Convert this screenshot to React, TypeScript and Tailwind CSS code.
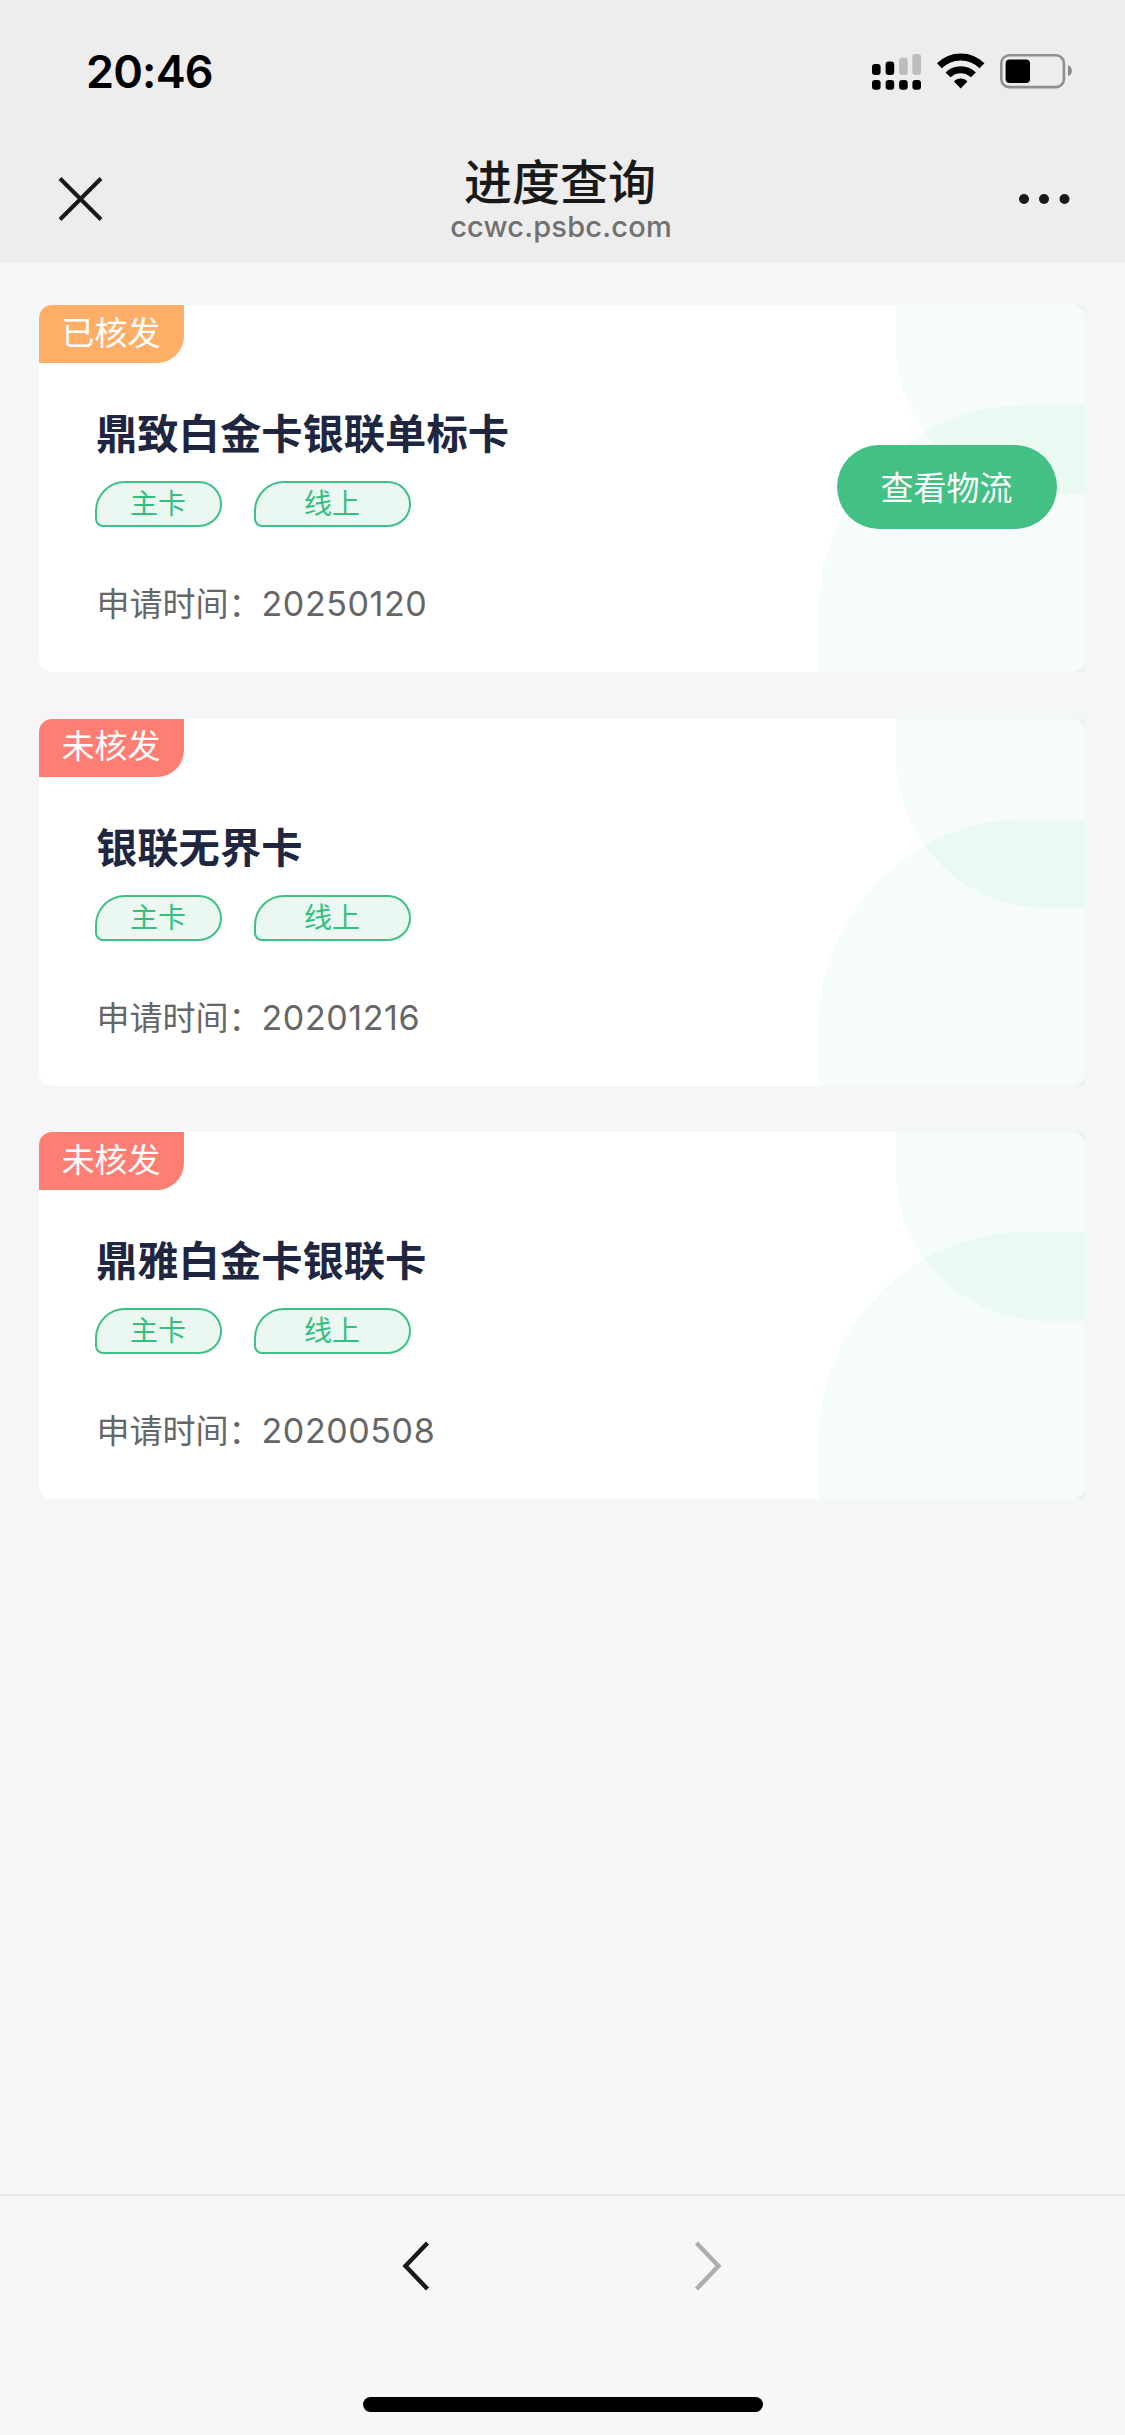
import clsx from "clsx";

interface Application {
  name: string;
  status: string;
  approved?: boolean;
  date: string;
}

const applications: Application[] = [
  { name: "鼎致白金卡银联单标卡", status: "已核发", approved: true, date: "20250120" },
  { name: "银联无界卡", status: "未核发", date: "20201216" },
  { name: "鼎雅白金卡银联卡", status: "未核发", date: "20200508" },
];

function SignalIcon() {
  return (
    <svg width="49" height="36" viewBox="0 0 49 36" className="mr-4">
      <rect x="0" y="10" width="8.6" height="11" rx="3" />
      <rect x="13.6" y="7.4" width="8.6" height="13.6" rx="3" />
      <rect x="27.1" y="3.8" width="8.6" height="17.2" rx="3" fill="#bcbcbc" />
      <rect x="40.4" y="0" width="8.6" height="21" rx="3" fill="#bcbcbc" />
      <rect x="0" y="26" width="8.6" height="9.8" rx="3" />
      <rect x="13.6" y="26" width="8.6" height="9.8" rx="3" />
      <rect x="27.1" y="26" width="8.6" height="9.8" rx="3" />
      <rect x="40.4" y="26" width="8.6" height="9.8" rx="3" />
    </svg>
  );
}

function WifiIcon() {
  return (
    <svg width="48" height="36" viewBox="0 0 48 36" className="mr-[15px] overflow-visible">
      <path d="M2.4 11.8C14.3 0 33.1 0 45 11.8" fill="none" stroke="#000" strokeWidth="7" />
      <path d="M11 20.9C18 13.9 29.4 13.9 36.4 20.9" fill="none" stroke="#000" strokeWidth="7" />
      <path d="M17 27.4C20.6 23.6 26.8 23.6 30.4 27.4L23.7 34.6Z" />
    </svg>
  );
}

function BatteryIcon() {
  return (
    <svg width="73" height="35" viewBox="0 0 73 35">
      <rect x="1.3" y="1.3" width="62.6" height="31.8" rx="8" fill="none" stroke="#8f8f8f" strokeWidth="2.6" />
      <rect x="5.6" y="5.5" width="24.4" height="23.4" rx="4" />
      <path d="M68 11.2C73.2 13 73.2 20.4 68 22.2Z" fill="#8a8a8a" />
    </svg>
  );
}

function Header() {
  return (
    <header className="h-[263px] bg-[#ededed]">
      <div className="flex h-[143px] items-start justify-between pl-[86px] pr-[52px] pt-[44px]">
        <span className="text-[45px] font-semibold leading-[56px] tracking-[-0.8px] text-black">20:46</span>
        <div className="flex items-start pt-[10px]">
          <SignalIcon />
          <WifiIcon />
          <BatteryIcon />
        </div>
      </div>
      <div className="flex h-[120px] items-start justify-between pl-[58px] pr-[54px]">
        <svg width="46" height="46" viewBox="0 0 46 46" className="mt-[33px]">
          <path d="M2 2.5L43 43.5M43 2.5L2 43.5" stroke="#191919" strokeWidth="4" />
        </svg>
        <div className="flex flex-col items-center pr-px pt-[12px]">
          <h1 className="pr-[2px] text-[48px] font-medium leading-[56px] text-[#191919]">进度查询</h1>
          <p className="text-[29px] font-medium leading-[32px] tracking-[0.2px] text-[#717171]">
            ccwc.psbc.com
          </p>
        </div>
        <svg width="52" height="12" viewBox="0 0 52 12" className="mt-[50px]">
          <circle cx="5" cy="6" r="5" fill="#191919" />
          <circle cx="25" cy="6" r="5" fill="#191919" />
          <circle cx="45.5" cy="6" r="5" fill="#191919" />
        </svg>
      </div>
    </header>
  );
}

function Tag({ label, wide }: { label: string; wide?: boolean }) {
  return (
    <span
      className={clsx(
        "flex h-[46px] items-center justify-center rounded-[23px] rounded-tl-[30px] rounded-bl-[8px] border-2 border-[#3ec183] bg-[#ebf8f2] pr-px text-[28px] leading-none text-[#35bf7e]",
        wide ? "w-[157px]" : "w-[127px]"
      )}
    >
      {label}
    </span>
  );
}

function ApplicationCard({ name, status, approved, date }: Application) {
  return (
    <div className="relative h-[367px] rounded-[13px] bg-white">
      <div className="absolute right-0 top-0 h-[189px] w-[189px] rounded-bl-[150px] bg-[#3cbc81]/5" />
      <div className="absolute bottom-0 right-0 h-[267px] w-[266px] rounded-tl-[207px] bg-[#3cbc81]/5" />
      <div
        className={clsx(
          "flex h-[58px] w-[145px] items-center justify-center rounded-tl-[13px] rounded-br-[27px] pb-[2px] pr-px text-[33px] leading-none text-white",
          approved ? "bg-[#ffae68]" : "bg-[#ff7e74]"
        )}
      >
        {status}
      </div>
      <div className="relative flex justify-between pl-[56px] pr-[28px]">
        <div>
          <h2 className="mt-[43px] pl-px text-[41.3px] font-bold leading-[56px] text-[#20263f]">{name}</h2>
          <div className="mt-[19px] flex gap-8">
            <Tag label="主卡" />
            <Tag label="线上" wide />
          </div>
          <p className="mt-[53px] flex pl-[1.5px] text-[33px] leading-[48px] text-[#666666]">
            <span className="w-[165px]">申请时间：</span>
            <span className="text-[34px] tracking-[0.6px]">{date}</span>
          </p>
        </div>
        {approved && (
          <button className="mt-[82px] h-[84px] w-[220px] rounded-full bg-[#43c084] pr-px pt-[2px] text-[33px] leading-none text-white">
            查看物流
          </button>
        )}
      </div>
    </div>
  );
}

function Footer() {
  return (
    <footer className="flex h-[241px] flex-col items-center border-t-2 border-[#e9e9eb] bg-[#f7f7f7] pt-[44px]">
      <div className="flex gap-[264px] pr-px">
        <svg width="28" height="52" viewBox="0 0 28 52">
          <path d="M25.5 3L3.5 26L25.5 49" fill="none" stroke="#191919" strokeWidth="4.4" />
        </svg>
        <svg width="28" height="52" viewBox="0 0 28 52">
          <path d="M2.5 3L24.5 26L2.5 49" fill="none" stroke="#adadad" strokeWidth="4.4" />
        </svg>
      </div>
      <div className="mt-[105px] h-[15px] w-[400px] rounded-full bg-black" />
    </footer>
  );
}

function App() {
  return (
    <div className="flex min-h-[2435px] w-full flex-col bg-[#f4f6f8] font-['Inter','Noto_Sans_CJK_SC',sans-serif]">
      <Header />
      <main className="flex flex-1 flex-col gap-[46.5px] pl-[39px] pr-[40px] pt-[42px]">
        {applications.map((item) => (
          <ApplicationCard key={item.date} {...item} />
        ))}
      </main>
      <Footer />
    </div>
  );
}

export default App;
